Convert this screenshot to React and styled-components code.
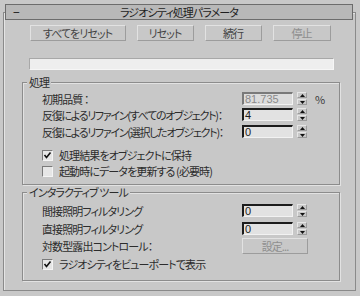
import React from "react";
import styled, { createGlobalStyle } from "styled-components";

const GlobalStyle = createGlobalStyle`
  html, body {
    margin: 0;
    padding: 0;
    background: #c8c8c8;
  }
  body {
    font-family: "Noto Sans CJK JP", "Noto Sans", sans-serif;
    font-size: 11px;
    letter-spacing: -0.9px;
    color: #2c2c2c;
    font-feature-settings: "palt";
  }
`;

const SpinArrow = ({ up }) => (
  <svg width="5" height="3" viewBox="0 0 5 3">
    <polygon points={up ? "2.5,0 5,3 0,3" : "0,0 5,0 2.5,3"} fill="#111" />
  </svg>
);

const Check = () => (
  <svg width="9" height="9" viewBox="0 0 9 9">
    <polyline points="1.5,4 3.5,6.5 7.5,1.5" fill="none" stroke="#111" strokeWidth="1.6" />
  </svg>
);

const Spinner = ({ value, disabled, unit }) => (
  <>
    <StField disabled={disabled}>{value}</StField>
    <StSpin>
      <StSpinHalf>
        <SpinArrow up />
      </StSpinHalf>
      <StSpinHalf>
        <SpinArrow />
      </StSpinHalf>
    </StSpin>
    {unit && <StUnit>{unit}</StUnit>}
  </>
);

const CheckBox = ({ checked, label }) => (
  <StCheckRow>
    <StBox>{checked && <Check />}</StBox>
    <span>{label}</span>
  </StCheckRow>
);

const App = () => {
  const buttons = [
    { text: "すべてをリセット", width: 96 },
    { text: "リセット", width: 57 },
    { text: "続行", width: 57 },
    { text: "停止", width: 58, disabled: true },
  ];

  return (
    <StPage>
      <GlobalStyle />
      <StRollout>
        <StTitleBar>
          <StMinus>−</StMinus>
          <StTitle>ラジオシティ処理パラメータ</StTitle>
          <span />
        </StTitleBar>

        <StButtons>
          {buttons.map((b) => (
            <StButton key={b.text} width={b.width} disabled={b.disabled}>
              {b.text}
            </StButton>
          ))}
        </StButtons>

        <StProgress />

        <StGroup mgtop="12px">
          <StGroupTitle>処理</StGroupTitle>
          <StGroupBody pdtop="4px" pdbottom="7px">
            <StRow>
              <StLabel>初期品質 ：</StLabel>
              <Spinner value="81.735" disabled unit="%" />
            </StRow>
            <StRow mgtop="3px">
              <StLabel tight>反復によるリファイン(すべてのオブジェクト)：</StLabel>
              <Spinner value="4" />
            </StRow>
            <StRow mgtop="4px">
              <StLabel tight>反復によるリファイン(選択したオブジェクト)：</StLabel>
              <Spinner value="0" />
            </StRow>
            <StSpacer h="11px" />
            <CheckBox checked label="処理結果をオブジェクトに保持" />
            <StSpacer h="4px" />
            <CheckBox label="起動時にデータを更新する (必要時)" />
          </StGroupBody>
        </StGroup>

        <StGroup mgtop="7px">
          <StGroupTitle>インタラクティブ ツール</StGroupTitle>
          <StGroupBody pdtop="6px" pdbottom="10px">
            <StRow>
              <StLabel>間接照明フィルタリング</StLabel>
              <Spinner value="0" />
            </StRow>
            <StRow mgtop="5px">
              <StLabel>直接照明フィルタリング</StLabel>
              <Spinner value="0" />
            </StRow>
            <StRow mgtop="3px" tall>
              <StLabel>対数型露出コントロール：</StLabel>
              <StButton width={66} disabled>
                設定...
              </StButton>
            </StRow>
            <StSpacer h="4px" />
            <CheckBox checked label="ラジオシティをビューポートで表示" />
          </StGroupBody>
        </StGroup>
      </StRollout>
    </StPage>
  );
};

export default App;

const StPage = styled.div`
  width: 360px;
  height: 296px;
  padding: 4px 0 0 3px;
  box-sizing: border-box;
  overflow: hidden;
`;

const StRollout = styled.div`
  margin-top: 8px;
  width: 353px;
  height: 279px;
  box-sizing: border-box;
  border: 1px solid #8a8a8a;
  box-shadow: inset 1px 1px 0 #e4e4e4;
  display: flex;
  flex-direction: column;
`;

const StTitleBar = styled.div`
  margin: -9px 2px 0 1px;
  height: 16px;
  box-sizing: border-box;
  border: 1px solid #6c6c6c;
  background: #b8b8b8;
  display: grid;
  grid-template-columns: 24px 1fr 24px;
  align-items: center;
  line-height: 12px;
`;

const StMinus = styled.span`
  padding-left: 7px;
  font-size: 12px;
  color: #111;
`;

const StTitle = styled.span`
  text-align: center;
  color: #1e1e1e;
`;

const StButtons = styled.div`
  margin-top: 5px;
  display: flex;
  justify-content: center;
  gap: 11px;
  padding-left: 1px;
`;

const StButton = styled.div`
  width: ${({ width }) => width}px;
  height: 16px;
  box-sizing: border-box;
  border-top: 1px solid #e2e2e2;
  border-left: 1px solid #e2e2e2;
  border-bottom: 1px solid #9c9c9c;
  border-right: 1px solid #9c9c9c;
  display: flex;
  align-items: center;
  justify-content: center;
  line-height: 12px;
  color: ${({ disabled }) => (disabled ? "#8e8e8e" : "#444")};
`;

const StProgress = styled.div`
  margin: 17px 0 0 25px;
  width: 305px;
  height: 12px;
  box-sizing: border-box;
  background: #eeeeee;
  border-top: 1px solid #a8a8a8;
  border-left: 1px solid #a8a8a8;
  border-bottom: 1px solid #f6f6f6;
  border-right: 1px solid #f6f6f6;
`;

const StGroup = styled.div`
  margin: ${({ mgtop }) => mgtop} 0 0 18px;
  width: 318px;
  box-sizing: border-box;
  border: 1px solid #8c8c8c;
  box-shadow: inset 1px 1px 0 #e2e2e2, 1px 1px 0 #e2e2e2;
  display: flex;
  flex-direction: column;
  align-items: flex-start;
`;

const StGroupTitle = styled.div`
  margin: -7px 0 0 4px;
  padding: 0 2px;
  height: 12px;
  line-height: 12px;
  background: #c8c8c8;
`;

const StGroupBody = styled.div`
  align-self: stretch;
  padding: ${({ pdtop }) => pdtop} 0 ${({ pdbottom }) => pdbottom} 19px;
  display: flex;
  flex-direction: column;
`;

const StRow = styled.div`
  margin-top: ${({ mgtop }) => mgtop || 0};
  height: ${({ tall }) => (tall ? 16 : 13)}px;
  display: flex;
  align-items: center;
`;

const StLabel = styled.span`
  flex: 0 0 200px;
  line-height: 12px;
  white-space: nowrap;
  letter-spacing: ${({ tight }) => (tight ? "-1.3px" : "inherit")};
`;

const StField = styled.div`
  width: 51px;
  height: 13px;
  box-sizing: border-box;
  background: ${({ disabled }) => (disabled ? "#dcdcdc" : "#e2e2e2")};
  border-top: 2px solid ${({ disabled }) => (disabled ? "#7a7a7a" : "#1c1c1c")};
  border-left: 2px solid ${({ disabled }) => (disabled ? "#7a7a7a" : "#1c1c1c")};
  border-bottom: 1px solid #f2f2f2;
  border-right: 1px solid #f2f2f2;
  padding-left: 1px;
  font-size: 11px;
  letter-spacing: 0;
  line-height: 10px;
  color: ${({ disabled }) => (disabled ? "#8a8a8a" : "#1c1c1c")};
  font-family: "Liberation Sans", sans-serif;
`;

const StSpin = styled.div`
  margin-left: 4px;
  width: 10px;
  height: 13px;
  display: flex;
  flex-direction: column;
  gap: 1px;
`;

const StSpinHalf = styled.div`
  flex: 1;
  box-sizing: border-box;
  border-top: 1px solid #e6e6e6;
  border-left: 1px solid #e6e6e6;
  border-bottom: 1px solid #9a9a9a;
  border-right: 1px solid #9a9a9a;
  display: flex;
  align-items: center;
  justify-content: center;
  & svg {
    display: block;
  }
`;

const StUnit = styled.span`
  margin-left: 8px;
  line-height: 12px;
  color: #3a3a3a;
`;

const StSpacer = styled.div`
  height: ${({ h }) => h};
`;

const StCheckRow = styled.div`
  height: 12px;
  display: flex;
  align-items: center;
  gap: 6px;
  line-height: 12px;
`;

const StBox = styled.div`
  width: 11px;
  height: 11px;
  box-sizing: border-box;
  background: #e6e6e6;
  border-top: 1px solid #7a7a7a;
  border-left: 1px solid #7a7a7a;
  border-bottom: 1px solid #f4f4f4;
  border-right: 1px solid #f4f4f4;
  display: flex;
  align-items: center;
  justify-content: center;
  & svg {
    display: block;
  }
`;
